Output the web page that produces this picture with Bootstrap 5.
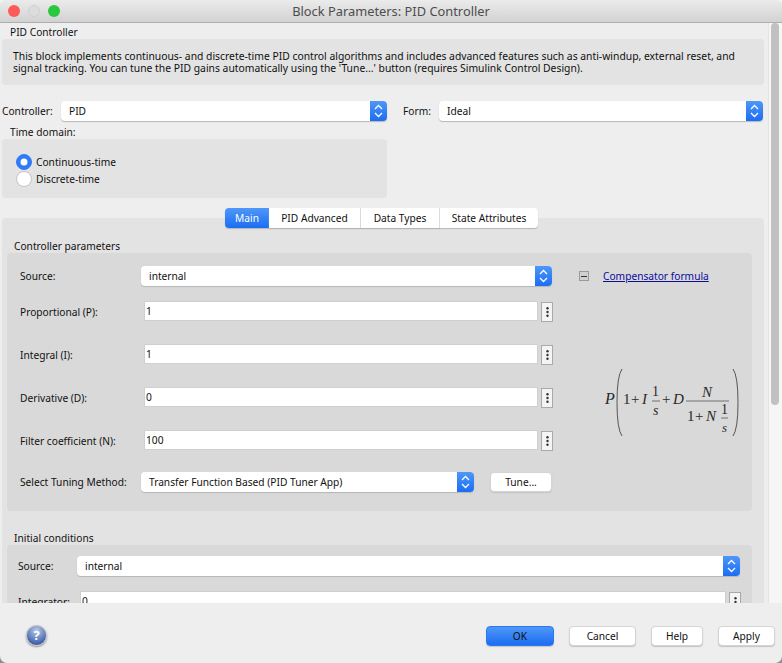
<!DOCTYPE html>
<html lang="en">
<head>
    <meta charset="UTF-8">
    <meta name="viewport" content="width=device-width, initial-scale=1.0">
    <title>Block Parameters: PID Controller</title>
    <link href="https://cdn.jsdelivr.net/npm/bootstrap@5.3.0/dist/css/bootstrap.min.css" rel="stylesheet">
    <style>
        html, body { height: 100%; overflow: hidden; }
        html { background: linear-gradient(#f2f2f2 50%, #8f8f8f 50%); }
        body { background: transparent; font-family: "Noto Sans", sans-serif; font-size: 10.2px; line-height: 14px; color: #111; }
        .mac-window { height: 663px; background: #eeeeee; border-radius: 6px 6px 7px 7px; overflow: hidden; }

        .mac-titlebar { height: 23px; display: grid; grid-template-columns: 1fr auto 1fr; align-items: center; padding: 0 8px; background: linear-gradient(#ebebeb, #d2d2d2); border-bottom: 1px solid #aeaeae; }
        .mac-title { font-size: 12.85px; color: #4d4d4d; }
        .light { width: 12px; height: 12px; border-radius: 50%; }
        .light-red { background: #fc5b57; }
        .light-off { background: #dcdcdc; border: 1px solid #cfcfcf; }
        .light-green { background: #2ac73f; }

        .mac-content { width: 768px; padding: 2px 4px 0 2px; overflow: hidden; }
        .mac-track { width: 14px; background: #f6f6f6; border-left: 1px solid #e4e4e4; padding: 0 3px 0 2px; }
        .mac-thumb { height: 382px; background: #c1c1c1; border-radius: 4px; }

        .panel-light { background: #e3e3e3; border-radius: 4px; }
        .panel-dark { background: #d9d9d9; border-radius: 4px; }
        .group-label { margin-left: 8px; height: 14px; }
        .desc-panel { height: 46px; padding: 11px 11px 0; font-size: 10.35px; line-height: 12px; white-space: nowrap; }

        .mac-select { height: 20px; display: flex; background: #fff; border-radius: 4px; box-shadow: 0 1px 1px #b5b5b5; overflow: hidden; }
        .mac-select .sel-text { flex-grow: 1; padding: 3px 8px; }
        .sel-arrow { width: 17px; background: linear-gradient(#4f97f8, #1b6df3); display: flex; align-items: center; justify-content: center; }
        .mac-field { height: 20px; width: 394px; margin-left: 3px; padding: 2px 1px; font-size: 10.2px; line-height: 14px; border: 1px solid #cfcfcf; border-radius: 1px; color: #111; }
        .dots-btn { width: 12px; height: 20px; margin: 1px 0 0 3px; background: #f4f4f4; border: 1px solid #a9a9a9; display: flex; align-items: center; justify-content: center; }

        .time-panel { width: 385px; height: 59px; padding: 14px 0 0 14px; }
        .time-panel .form-check { min-height: 17px; margin: 0; padding-left: 20px; display: flex; align-items: center; }
        .time-panel .form-check-input { width: 16px; height: 16px; margin: 0 4px 0 -20px; float: none; border: 1px solid #c4c4c4; flex-shrink: 0; }
        .time-panel .form-check-input:checked { background-color: #2f7cf6; border-color: #2f7cf6; }

        .tab-strip { position: relative; z-index: 1; margin-top: 10px; padding-left: 223px; }
        .tab-btn { height: 20px; padding: 0; font-size: 10.2px; line-height: 20px; color: #111; background: #fff; border: 0; border-right: 1px solid #e0e0e0; border-radius: 0; box-shadow: 0 1px 1px #b5b5b5; }
        .tab-btn:first-child { border-radius: 4px 0 0 4px; border-right: 0; }
        .tab-btn:last-child { border-radius: 0 4px 4px 0; border-right: 0; }
        .tab-btn.tab-on { color: #fff; background: linear-gradient(#4f97f8, #1b6df3); }

        .tab-panel { margin-top: -10px; padding: 21px 12px 0 5px; }
        .params-panel { height: 258px; padding: 13px 0 0 13px; }
        .form-line { height: 20px; margin-top: 23px; }
        .form-label-col { width: 121px; flex-shrink: 0; }
        .minus-box { width: 10px; height: 10px; margin-right: 14px; background: #d0d0d0; border: 1px solid #9a9a9a; display: flex; align-items: center; justify-content: center; }
        .minus-box span { width: 6px; height: 1px; background: #333; }
        .formula-link { color: #0b0b9c; text-decoration: underline; }
        .formula-svg { display: block; margin: 78px 0 0 21px; font-family: "Liberation Serif", serif; fill: #2a2a2a; }

        .mac-btn { height: 20px; padding: 0; font-size: 10.2px; line-height: 18px; color: #111; background: #fff; border: 1px solid #d4d4d4; border-radius: 4px; box-shadow: 0 1px 1px #c4c4c4; }
        .mac-btn-primary { background: linear-gradient(#4f97f8, #1b6df3); border-color: #2b78f0; }
        .init-panel { height: 100px; padding: 11px 0 0 11px; }

        .mac-footer { height: 60px; padding: 23px 7px 0 26px; }
        .help-icon { width: 21px; height: 21px; border-radius: 50%; margin-top: -1px; background: radial-gradient(circle at 50% 25%, #b9cbec, #3f62ac 75%); border: 1px solid #c3c3c3; box-shadow: 0 1px 2px #888; color: #fff; font-weight: 700; font-size: 13px; line-height: 19px; text-align: center; }
    </style>
</head>
<body>
    <div class="mac-window d-flex flex-column">
        <div class="mac-titlebar flex-shrink-0">
            <div class="d-flex gap-2">
                <div class="light light-red"></div>
                <div class="light light-off"></div>
                <div class="light light-green"></div>
            </div>
            <div class="mac-title">Block Parameters: PID Controller</div>
            <div></div>
        </div>

        <div class="d-flex flex-grow-1" style="min-height: 0">
            <div class="mac-content">
                <div class="group-label">PID Controller</div>
                <div class="panel-light desc-panel">This block implements continuous- and discrete-time PID control algorithms and includes advanced features such as anti-windup, external reset, and<br>signal tracking. You can tune the PID gains automatically using the 'Tune...' button (requires Simulink Control Design).</div>

                <div class="d-flex align-items-center" style="margin-top: 16px">
                    <div style="width: 59px">Controller:</div>
                    <div class="mac-select" style="width: 326px">
                        <div class="sel-text">PID</div>
                        <div class="sel-arrow"><svg width="9" height="14" viewBox="0 0 9 14" fill="none" stroke="#fff" stroke-width="1.3"><path d="M1 5 4.5 1.5 8 5M1 9 4.5 12.5 8 9"/></svg></div>
                    </div>
                    <div style="margin-left: 16px; width: 36px">Form:</div>
                    <div class="mac-select" style="width: 324px">
                        <div class="sel-text">Ideal</div>
                        <div class="sel-arrow"><svg width="9" height="14" viewBox="0 0 9 14" fill="none" stroke="#fff" stroke-width="1.3"><path d="M1 5 4.5 1.5 8 5M1 9 4.5 12.5 8 9"/></svg></div>
                    </div>
                </div>

                <div class="group-label" style="margin-top: 4px">Time domain:</div>
                <div class="panel-light time-panel">
                    <div class="form-check">
                        <input class="form-check-input" type="radio" name="domain" id="domainCont" checked>
                        <label class="form-check-label" for="domainCont">Continuous-time</label>
                    </div>
                    <div class="form-check">
                        <input class="form-check-input" type="radio" name="domain" id="domainDisc">
                        <label class="form-check-label" for="domainDisc">Discrete-time</label>
                    </div>
                </div>

                <div class="tab-strip d-flex">
                    <button class="tab-btn tab-on" style="width: 44px">Main</button>
                    <button class="tab-btn" style="width: 92px">PID Advanced</button>
                    <button class="tab-btn" style="width: 79px">Data Types</button>
                    <button class="tab-btn" style="width: 98px">State Attributes</button>
                </div>

                <div class="panel-light tab-panel">
                    <div class="group-label" style="margin-left: 7px">Controller parameters</div>
                    <div class="panel-dark params-panel d-flex">
                        <div style="width: 540px" class="flex-shrink-0">
                            <div class="d-flex align-items-center" style="height: 20px">
                                <div class="form-label-col">Source:</div>
                                <div class="mac-select" style="width: 411px">
                                    <div class="sel-text">internal</div>
                                    <div class="sel-arrow"><svg width="9" height="14" viewBox="0 0 9 14" fill="none" stroke="#fff" stroke-width="1.3"><path d="M1 5 4.5 1.5 8 5M1 9 4.5 12.5 8 9"/></svg></div>
                                </div>
                            </div>
                            <div class="form-line d-flex align-items-start" style="margin-top: 15px">
                                <div class="form-label-col" style="padding-top: 4px">Proportional (P):</div>
                                <input class="form-control mac-field" value="1">
                                <div class="dots-btn"><svg width="3" height="10" viewBox="0 0 3 10" fill="#333"><circle cx="1.500" cy="1.200" r="1.200"/><circle cx="1.500" cy="5" r="1.200"/><circle cx="1.500" cy="8.800" r="1.200"/></svg></div>
                            </div>
                            <div class="form-line d-flex align-items-start">
                                <div class="form-label-col" style="padding-top: 4px">Integral (I):</div>
                                <input class="form-control mac-field" value="1">
                                <div class="dots-btn"><svg width="3" height="10" viewBox="0 0 3 10" fill="#333"><circle cx="1.500" cy="1.200" r="1.200"/><circle cx="1.500" cy="5" r="1.200"/><circle cx="1.500" cy="8.800" r="1.200"/></svg></div>
                            </div>
                            <div class="form-line d-flex align-items-start">
                                <div class="form-label-col" style="padding-top: 4px">Derivative (D):</div>
                                <input class="form-control mac-field" value="0">
                                <div class="dots-btn"><svg width="3" height="10" viewBox="0 0 3 10" fill="#333"><circle cx="1.500" cy="1.200" r="1.200"/><circle cx="1.500" cy="5" r="1.200"/><circle cx="1.500" cy="8.800" r="1.200"/></svg></div>
                            </div>
                            <div class="form-line d-flex align-items-start">
                                <div class="form-label-col" style="padding-top: 4px">Filter coefficient (N):</div>
                                <input class="form-control mac-field" value="100">
                                <div class="dots-btn"><svg width="3" height="10" viewBox="0 0 3 10" fill="#333"><circle cx="1.500" cy="1.200" r="1.200"/><circle cx="1.500" cy="5" r="1.200"/><circle cx="1.500" cy="8.800" r="1.200"/></svg></div>
                            </div>
                            <div class="form-line d-flex align-items-center" style="margin-top: 22px">
                                <div class="form-label-col">Select Tuning Method:</div>
                                <div class="mac-select" style="width: 333px">
                                    <div class="sel-text">Transfer Function Based (PID Tuner App)</div>
                                    <div class="sel-arrow"><svg width="9" height="14" viewBox="0 0 9 14" fill="none" stroke="#fff" stroke-width="1.3"><path d="M1 5 4.5 1.5 8 5M1 9 4.5 12.5 8 9"/></svg></div>
                                </div>
                                <button class="mac-btn" style="width: 62px; margin-left: 16px">Tune...</button>
                            </div>
                        </div>
                        <div style="margin-left: 19px">
                            <div class="d-flex align-items-center" style="height: 20px">
                                <div class="minus-box"><span></span></div>
                                <a href="#" class="formula-link">Compensator formula</a>
                            </div>
                            <svg class="formula-svg" width="145" height="76" viewBox="0 0 145 76">
                                <path d="M22 5Q17 12 17 38.500Q17 65 22 72M133 5Q138 12 138 38.500Q138 65 133 72" fill="none" stroke="#555" stroke-width="1"/>
                                <path d="M52 37h8M86 37h43M121 54h7" stroke="#555" stroke-width=".8"/>
                                <text x="5" y="40" font-size="16" font-style="italic">P</text>
                                <text x="23" y="40" font-size="15">1</text>
                                <text x="31" y="40" font-size="15">+</text>
                                <text x="42" y="40" font-size="15" font-style="italic">I</text>
                                <text x="52" y="32" font-size="14">1</text>
                                <text x="53" y="51" font-size="14" font-style="italic">s</text>
                                <text x="62" y="40" font-size="15">+</text>
                                <text x="73" y="40" font-size="15" font-style="italic">D</text>
                                <text x="102" y="33" font-size="15" font-style="italic">N</text>
                                <text x="87" y="57" font-size="15">1</text>
                                <text x="95" y="57" font-size="15">+</text>
                                <text x="106" y="57" font-size="15" font-style="italic">N</text>
                                <text x="121" y="50" font-size="14">1</text>
                                <text x="122" y="68" font-size="13" font-style="italic">s</text>
                            </svg>
                        </div>
                    </div>

                    <div class="group-label" style="margin: 20px 0 0 7px">Initial conditions</div>
                    <div class="panel-dark init-panel">
                        <div class="d-flex align-items-center" style="height: 20px">
                            <div style="width: 59px">Source:</div>
                            <div class="mac-select" style="width: 663px">
                                <div class="sel-text">internal</div>
                                <div class="sel-arrow"><svg width="9" height="14" viewBox="0 0 9 14" fill="none" stroke="#fff" stroke-width="1.3"><path d="M1 5 4.5 1.5 8 5M1 9 4.5 12.5 8 9"/></svg></div>
                            </div>
                        </div>
                        <div class="d-flex align-items-start" style="margin-top: 15px; height: 20px">
                            <div style="width: 59px; padding-top: 4px">Integrator:</div>
                            <input class="form-control mac-field" style="width: 646px" value="0">
                            <div class="dots-btn"><svg width="3" height="10" viewBox="0 0 3 10" fill="#333"><circle cx="1.500" cy="1.200" r="1.200"/><circle cx="1.500" cy="5" r="1.200"/><circle cx="1.500" cy="8.800" r="1.200"/></svg></div>
                        </div>
                    </div>
                </div>
            </div>
            <div class="mac-track"><div class="mac-thumb"></div></div>
        </div>

        <div class="mac-footer d-flex flex-shrink-0">
            <div class="help-icon">?</div>
            <div class="d-flex ms-auto" style="gap: 15px">
                <button class="mac-btn mac-btn-primary" style="width: 68px">OK</button>
                <button class="mac-btn" style="width: 67px">Cancel</button>
                <button class="mac-btn" style="width: 52px">Help</button>
                <button class="mac-btn" style="width: 57px">Apply</button>
            </div>
        </div>
    </div>
    <script src="https://cdn.jsdelivr.net/npm/bootstrap@5.3.0/dist/js/bootstrap.bundle.min.js"></script>
</body>
</html>
